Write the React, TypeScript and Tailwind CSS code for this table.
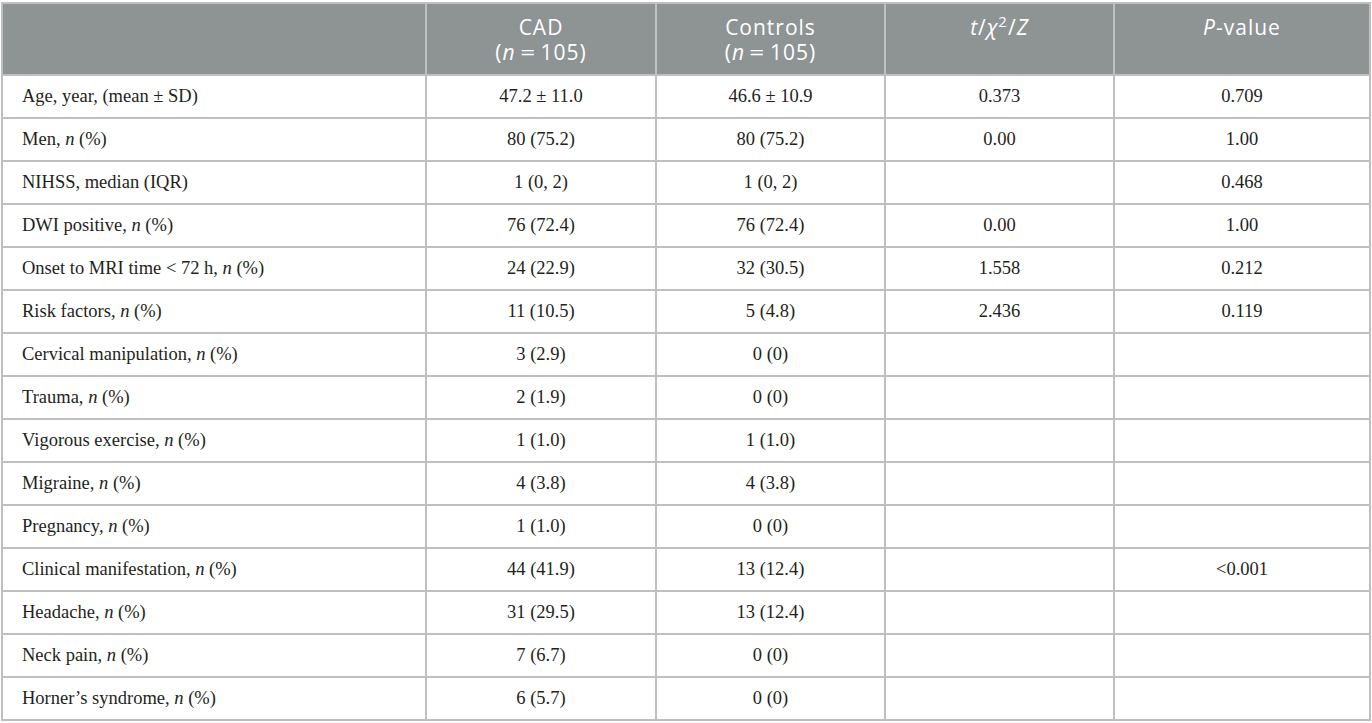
import React from 'react';

type Row = {
  label: React.ReactNode;
  cad: React.ReactNode;
  ctrl: React.ReactNode;
  stat?: string;
  p?: string;
};

const N = () => <i>n</i>;

const rows: Row[] = [
  { label: <>Age, year, (mean ± SD)</>, cad: '47.2 ± 11.0', ctrl: '46.6 ± 10.9', stat: '0.373', p: '0.709' },
  { label: <>Men, <N /> (%)</>, cad: '80 (75.2)', ctrl: '80 (75.2)', stat: '0.00', p: '1.00' },
  { label: <>NIHSS, median (IQR)</>, cad: '1 (0, 2)', ctrl: '1 (0, 2)', p: '0.468' },
  { label: <>DWI positive, <N /> (%)</>, cad: '76 (72.4)', ctrl: '76 (72.4)', stat: '0.00', p: '1.00' },
  { label: <>Onset to MRI time &lt; 72 h, <N /> (%)</>, cad: '24 (22.9)', ctrl: '32 (30.5)', stat: '1.558', p: '0.212' },
  { label: <>Risk factors, <N /> (%)</>, cad: '11 (10.5)', ctrl: '5 (4.8)', stat: '2.436', p: '0.119' },
  { label: <>Cervical manipulation, <N /> (%)</>, cad: '3 (2.9)', ctrl: '0 (0)' },
  { label: <>Trauma, <N /> (%)</>, cad: '2 (1.9)', ctrl: '0 (0)' },
  { label: <>Vigorous exercise, <N /> (%)</>, cad: '1 (1.0)', ctrl: '1 (1.0)' },
  { label: <>Migraine, <N /> (%)</>, cad: '4 (3.8)', ctrl: '4 (3.8)' },
  { label: <>Pregnancy, <N /> (%)</>, cad: '1 (1.0)', ctrl: '0 (0)' },
  { label: <>Clinical manifestation, <N /> (%)</>, cad: '44 (41.9)', ctrl: '13 (12.4)', p: '<0.001' },
  { label: <>Headache, <N /> (%)</>, cad: '31 (29.5)', ctrl: '13 (12.4)' },
  { label: <>Neck pain, <N /> (%)</>, cad: '7 (6.7)', ctrl: '0 (0)' },
  { label: <>Horner’s syndrome, <N /> (%)</>, cad: '6 (5.7)', ctrl: '0 (0)' },
];

const th = 'border-2 border-[#bdc0be] align-top pt-[11px] font-normal text-center';
const td = 'border-2 border-[#bdc0be] text-center';

// header "(n = 105)" with the wide math-style equals sign
const NCount = () => (
  <>
    (<i>n</i>
    <span className="inline-block mx-[6px] scale-x-125">=</span>105)
  </>
);

const App: React.FC = () => {
  return (
    <div className="w-[1372px] h-[723px] bg-white pl-[1px] pt-[2px]">
      <table className="border-collapse table-fixed w-[1368px] text-[#231f20] font-['Liberation_Serif',serif] text-[18.5px]">
        <colgroup>
          <col className="w-[424px]" />
          <col className="w-[230px]" />
          <col className="w-[229px]" />
          <col className="w-[229px]" />
          <col className="w-[256px]" />
        </colgroup>
        <thead>
          <tr className="h-[72px] bg-[#8e9394] text-white font-['Open_Sans',sans-serif] text-[21px] leading-[25px] tracking-[1px]">
            <th className={th}></th>
            <th className={th}>
              <div>CAD</div>
              <div>
                <NCount />
              </div>
            </th>
            <th className={th}>
              <div>Controls</div>
              <div>
                <NCount />
              </div>
            </th>
            <th className={th}>
              <i>t</i>/<i>χ</i>
              <span className="inline-block text-[15px] leading-[15px] align-top -mt-[1px]">2</span>/<i>Z</i>
            </th>
            <th className={th}>
              <i>P</i>-value
            </th>
          </tr>
        </thead>
        <tbody>
          {rows.map((r, i) => (
            <tr key={i} className="h-[43px]">
              <td className="border-2 border-[#bdc0be] text-left pl-[19px]">{r.label}</td>
              <td className={td}>{r.cad}</td>
              <td className={td}>{r.ctrl}</td>
              <td className={td}>{r.stat}</td>
              <td className={td}>{r.p}</td>
            </tr>
          ))}
        </tbody>
      </table>
    </div>
  );
};

export default App;
